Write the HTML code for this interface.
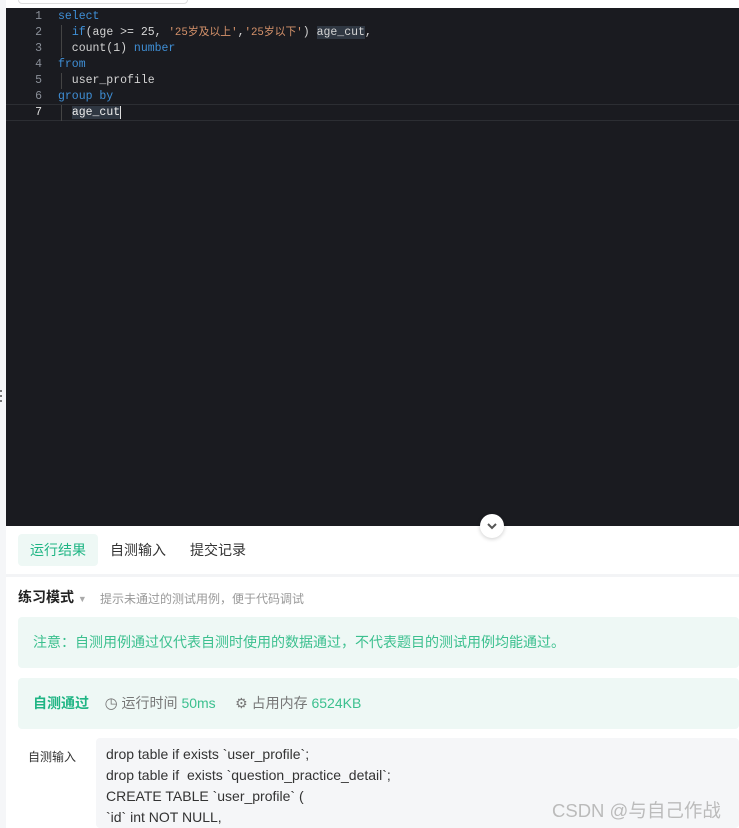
<!DOCTYPE html>
<html><head><meta charset="utf-8"><style>
*{margin:0;padding:0;box-sizing:border-box}
body{width:739px;height:828px;overflow:hidden;background:#fff;font-family:"Liberation Sans","Noto Sans CJK SC",sans-serif;position:relative}
.left{position:absolute;left:0;top:0;width:6px;height:828px;background:#f5f6f8}
.dots{position:absolute;left:0;top:390px;width:2px}
.dots i{display:block;width:2px;height:2px;background:#777;margin-bottom:3px}
.topbox{position:absolute;left:18px;top:-10px;width:170px;height:14px;border:1px solid #ddd;border-radius:4px;background:#fff}
.ed{position:absolute;left:6px;top:8px;width:733px;height:518px;background:#1a1b20;font-family:"Liberation Mono","Noto Sans CJK SC",monospace;font-size:11.5px;color:#d4d4d4}
.ln{position:absolute;left:0;width:36px;text-align:right;color:#8a8f98;height:16px;line-height:16px;margin-top:1px}
.cd{position:absolute;left:52px;height:16px;line-height:16px;white-space:pre;margin-top:1px}
.kw{color:#3f8fd6}.st{color:#d7936b;font-size:10.8px}
.guide{position:absolute;left:55px;width:1px;height:16px;background:#444}
.cur{position:absolute;left:0;top:96px;width:733px;height:17px;border-top:1px solid #2c2e33;border-bottom:1px solid #2c2e33}
.hl{background:#2f3742}
.tog{position:absolute;left:480px;top:514px;width:24px;height:24px;border-radius:50%;background:#fff;box-shadow:0 1px 4px rgba(0,0,0,.2)}
.tab{position:absolute;top:534px;height:32px;line-height:32px;font-size:14px;color:#333;padding:0 12px}
.tab.a{background:#eef8f5;color:#1fb584;border-radius:4px}
.sep{position:absolute;left:6px;top:574px;width:733px;height:3px;background:#f3f4f6}
.box{position:absolute;left:18px;width:721px;background:#eef8f5;border-radius:4px;font-size:14px}
</style></head><body>
<div class="left"><div class="dots"><i></i><i></i><i></i></div></div>
<div class="topbox"></div>
<div class="ed">
<div class="cur"></div>
<div class="ln" style="top:0">1</div><div class="ln" style="top:16px">2</div><div class="ln" style="top:32px">3</div><div class="ln" style="top:48px">4</div><div class="ln" style="top:64px">5</div><div class="ln" style="top:80px">6</div><div class="ln" style="top:96px;color:#ddd">7</div>
<div class="guide" style="top:17px"></div><div class="guide" style="top:33px"></div><div class="guide" style="top:65px"></div><div class="guide" style="top:97px"></div>
<div class="cd kw" style="top:0">select</div>
<div class="cd" style="top:16px">  <span class="kw">if</span>(age &gt;= 25, <span class="st">'25岁及以上'</span>,<span class="st">'25岁以下'</span>) <span class="hl">age_cut</span>,</div>
<div class="cd" style="top:32px">  count(1) <span class="kw">number</span></div>
<div class="cd kw" style="top:48px">from</div>
<div class="cd" style="top:64px">  user_profile</div>
<div class="cd kw" style="top:80px">group by</div>
<div class="cd" style="top:96px;color:#eee">  <span class="hl">age_cut</span><span style="border-left:1px solid #ddd"></span></div>
</div>
<div class="tog"><svg width="24" height="24"><path d="M8 10l4 4 4-4" stroke="#555" stroke-width="2" fill="none"/></svg></div>
<div class="tab a" style="left:18px">运行结果</div>
<div class="tab" style="left:98px">自测输入</div>
<div class="tab" style="left:178px">提交记录</div>
<div class="sep"></div>
<div style="position:absolute;left:18px;top:587px;font-size:14px;font-weight:bold;color:#222">练习模式 <span style="color:#aaa;font-size:9px;font-weight:normal">▼</span></div>
<div style="position:absolute;left:100px;top:590px;font-size:12px;color:#999">提示未通过的测试用例，便于代码调试</div>
<div class="box" style="top:617px;height:51px;line-height:51px;padding-left:15px;color:#3cc08f">注意：自测用例通过仅代表自测时使用的数据通过，不代表题目的测试用例均能通过。</div>
<div class="box" style="top:678px;height:51px;line-height:51px;padding-left:15px;color:#777"><b style="color:#1fb584">自测通过</b>&nbsp;&nbsp;&nbsp;&nbsp;<span style="font-size:15px">◷</span> 运行时间 <span style="color:#3cc08f">50ms</span>&nbsp;&nbsp;&nbsp;&nbsp;&nbsp;<span>⚙</span> 占用内存 <span style="color:#3cc08f">6524KB</span></div>
<div style="position:absolute;left:28px;top:748px;font-size:12px;color:#333">自测输入</div>
<div style="position:absolute;left:96px;top:738px;width:643px;height:90px;background:#f5f6f8;border-radius:4px;padding:6px 0 0 10px;font-size:14px;line-height:21px;color:#333;white-space:pre">drop table if exists `user_profile`;
drop table if  exists `question_practice_detail`;
CREATE TABLE `user_profile` (
`id` int NOT NULL,</div>
<div style="position:absolute;left:552px;top:797px;font-size:18.5px;color:#bbb">CSDN @与自己作战</div>
</body></html>
